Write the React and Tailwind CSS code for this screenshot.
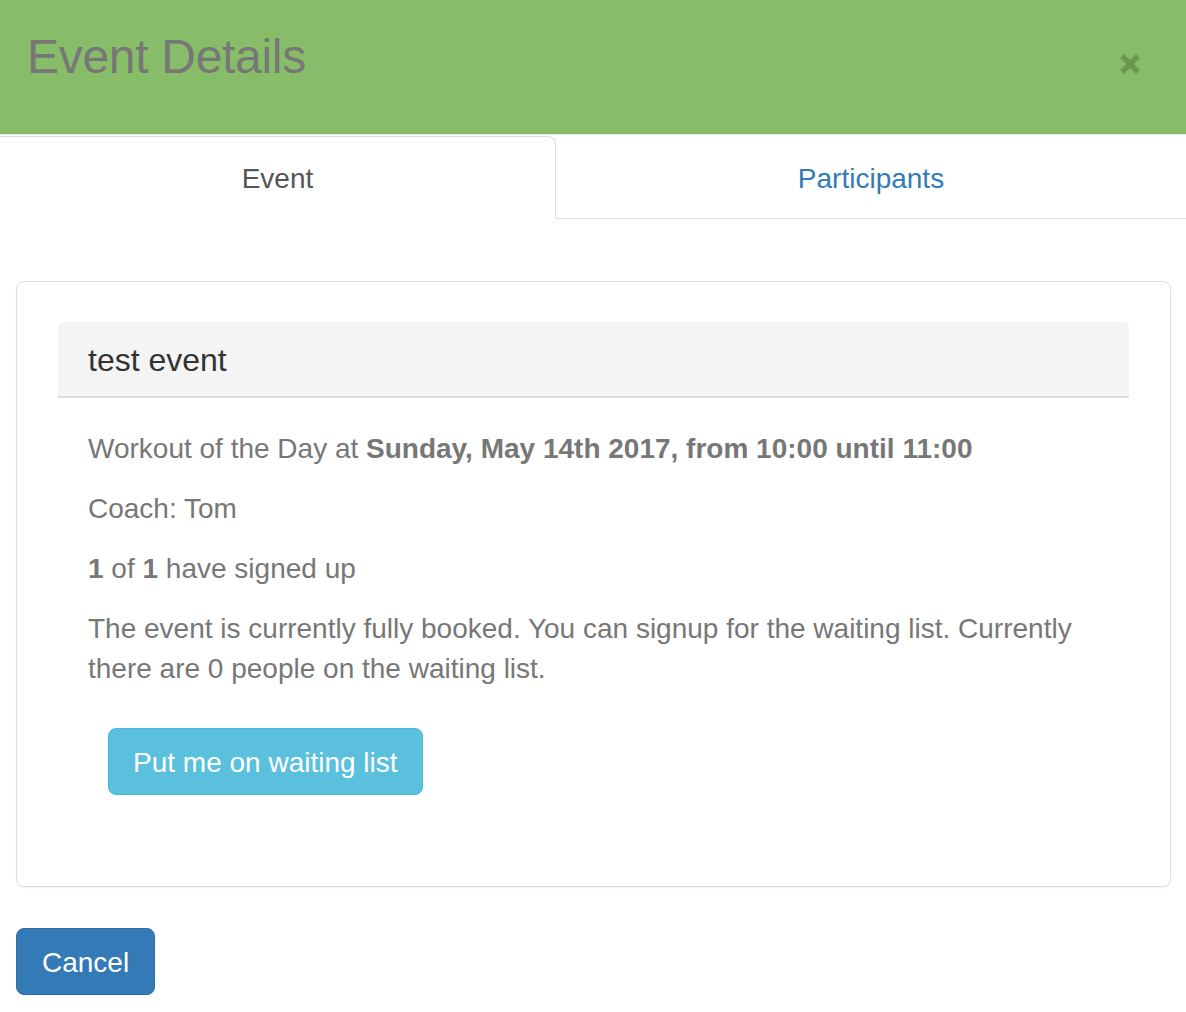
import React, { useState } from 'react';

const EventDetails = () => {
  const [tab, setTab] = useState('event');

  return (
    <div className="w-[1186px] h-[1012px] bg-white font-['Liberation_Sans',Arial,sans-serif]">
      {/* Header */}
      <div className="h-[135px] bg-[#87bd68] border-b border-[#e5e5e5] flex justify-between pl-[27px] pr-[45px] pt-[30px]">
        <h4 className="text-[48px] leading-[53px] tracking-[-0.3px] text-[#777]">Event Details</h4>
        <button type="button" className="mt-[23px] w-[22px] h-[22px] opacity-20">
          <svg width="22" height="22" viewBox="0 0 22 22">
            <path d="M3 3 L19 19 M19 3 L3 19" stroke="#000" strokeWidth="5.5" strokeLinecap="butt" />
          </svg>
        </button>
      </div>

      {/* Tabs */}
      <div className="mt-px flex items-start border-b border-[#ddd]">
        <button
          type="button"
          onClick={() => setTab('event')}
          className="w-[556px] -mb-px bg-white border-t border-r border-b border-[#ddd] border-b-white rounded-tr-[8px] pt-[22px] pb-[19px] text-[28px] leading-[40px] text-[#555]"
        >
          Event
        </button>
        <button
          type="button"
          onClick={() => setTab('participants')}
          className="flex-1 border-t border-transparent pt-[22px] pb-[18px] text-[28px] leading-[40px] text-[#337ab7]"
        >
          Participants
        </button>
      </div>

      {/* Panel */}
      <div className="mt-[62px] ml-[16px] mr-[15px] border border-[#ddd] rounded-[8px] shadow-[0_1px_2px_rgba(0,0,0,0.05)] pt-[40px] px-[41px] pb-[40px]">
        <div className="h-[76px] bg-[#f4f4f4] border-b-2 border-[#ddd] rounded-t-[6px] px-[30px] pt-[2px] flex items-center text-[32px] text-[#333]">
          test event
        </div>
        <div className="px-[30px] pt-[31px] pb-[51px] text-[28px] leading-[40px] text-[#777]">
          <p className="mb-[20px]">
            Workout of the Day at <b>Sunday, May 14th 2017, from 10:00 until 11:00</b>
          </p>
          <p className="mb-[20px]">Coach: Tom</p>
          <p className="mb-[20px]">
            <b>1</b> of <b>1</b> have signed up
          </p>
          <p className="mb-[20px]">
            The event is currently fully booked. You can signup for the waiting list. Currently there are 0 people on
            the waiting list.
          </p>
          <button
            type="button"
            className="mt-[19px] ml-[20px] h-[67px] px-[24px] pt-[2px] bg-[#5bc0de] border border-[#46b8da] rounded-[8px] text-white text-[28px] leading-[40px]"
          >
            Put me on waiting list
          </button>
        </div>
      </div>

      {/* Footer */}
      <div className="mt-[41px] ml-[16px]">
        <button
          type="button"
          className="h-[67px] px-[25px] pt-[2px] bg-[#337ab7] border border-[#2e6da4] rounded-[8px] text-white text-[28px] leading-[40px]"
        >
          Cancel
        </button>
      </div>
    </div>
  );
};

export default function App() {
  return <EventDetails />;
}
